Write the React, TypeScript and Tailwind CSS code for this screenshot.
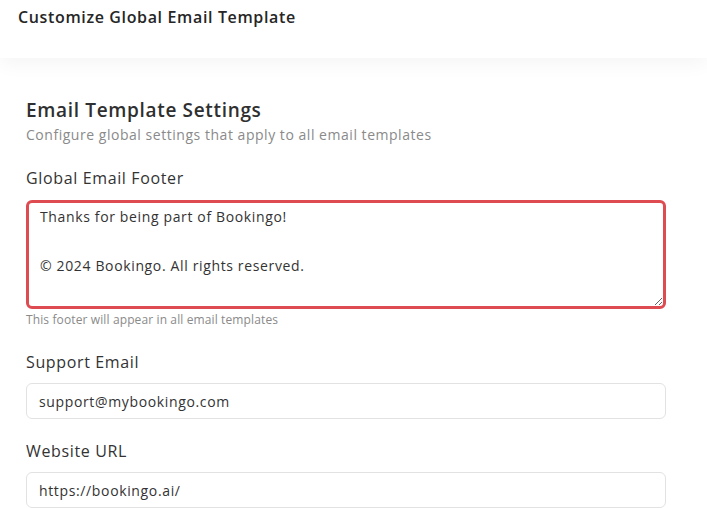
export default function App() {
  return (
    <div className="min-h-screen bg-white text-[#2d2d2d] tracking-[0.04em]" style={{ fontFamily: '"Open Sans", "Liberation Sans", sans-serif' }}>
      <header className="relative z-10 h-[58px] bg-white px-[18px] pt-[6px] shadow-[0_6px_18px_rgba(0,0,0,0.045)]">
        <h1 className="text-[16px] font-semibold leading-[22px] text-[#262626]">Customize Global Email Template</h1>
      </header>

      <main className="px-[26px] pt-[39px]">
        <div className="w-[640px]">
          <h2 className="text-[19px] font-semibold leading-[26px] tracking-[0.035em] text-[#2f2f2f]">Email Template Settings</h2>
          <p className="mt-[2px] text-[14px] leading-[20px] tracking-[0.038em] text-[#8a8a8a]">
            Configure global settings that apply to all email templates
          </p>

          <div className="mt-[22px]">
            <label className="block text-[16px] font-medium leading-[22px] text-[#333]">Global Email Footer</label>
            <textarea
              className="mt-[11px] block h-[109px] w-full resize-y rounded-[6px] border-[3px] border-[#de4b51] px-[11px] pt-[2px] text-[14px] leading-[24.5px] text-[#333] outline-none"
              defaultValue={"Thanks for being part of Bookingo!\n\n© 2024 Bookingo. All rights reserved."}
            />
            <p className="mt-[3px] text-[12px] leading-[16px] tracking-[0.01em] text-[#8a8a8a]">This footer will appear in all email templates</p>
          </div>

          <div className="mt-[23px]">
            <label className="block text-[16px] font-medium leading-[22px] text-[#333]">Support Email</label>
            <input
              className="mt-[10px] block h-[36px] w-full rounded-[6px] border border-[#e2e2e2] px-[12px] text-[14px] text-[#333] outline-none"
              defaultValue="support@mybookingo.com"
            />
          </div>

          <div className="mt-[21px]">
            <label className="block text-[16px] font-medium leading-[22px] text-[#333]">Website URL</label>
            <input
              className="mt-[10px] block h-[36px] w-full rounded-[6px] border border-[#e2e2e2] px-[12px] text-[14px] text-[#333] outline-none"
              defaultValue="https://bookingo.ai/"
            />
          </div>
        </div>
      </main>
    </div>
  );
}
